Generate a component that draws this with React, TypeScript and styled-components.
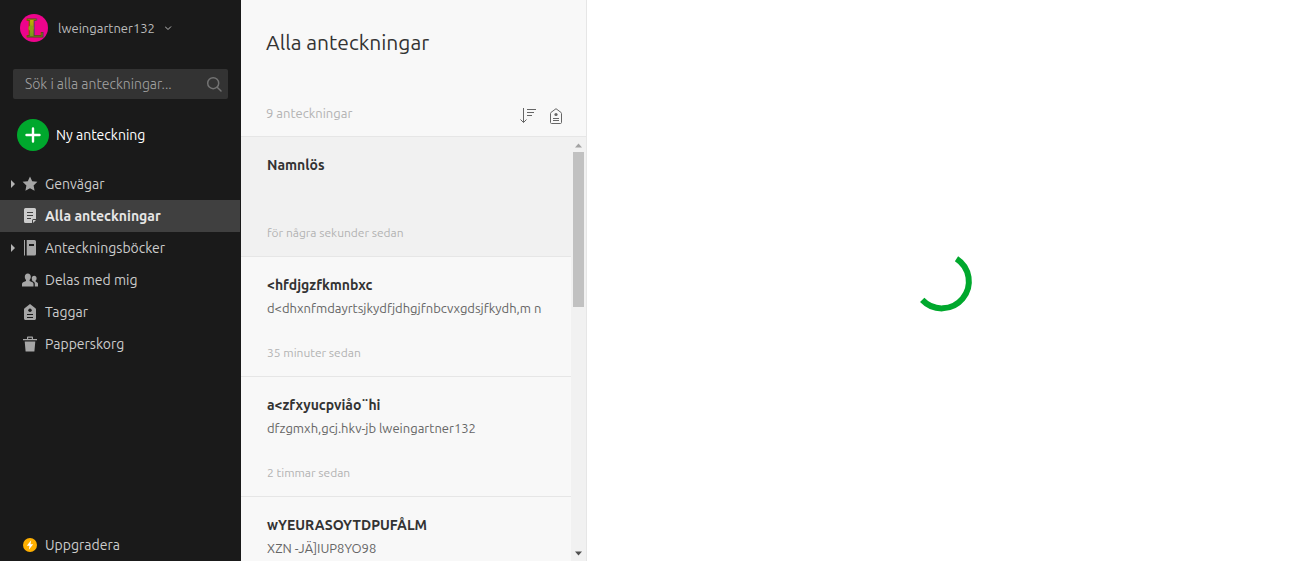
import React from 'react';
import styled, { createGlobalStyle } from 'styled-components';

const GlobalStyle = createGlobalStyle`
  *, *::before, *::after { box-sizing: border-box; }
  body {
    margin: 0;
    background: #fff;
    font-family: Ubuntu, 'Open Sans', 'Noto Sans', sans-serif;
    font-size: 13px;
  }
  button, input { font: inherit; }
  h1, h2, p, ul { margin: 0; padding: 0; }
`;

const Shell = styled.div`
  display: flex;
  height: 100vh;
  overflow: hidden;
`;

const Sidebar = styled.aside`
  display: flex;
  flex-direction: column;
  flex: none;
  width: 241px;
  border-right: 1px solid #1a1a1a;
  background: #1a1a1a;
`;

const AccountButton = styled.button`
  display: flex;
  align-items: center;
  align-self: flex-start;
  gap: 10px;
  margin: 14px 0 0 20px;
  padding: 0;
  border: 0;
  background: none;
  color: #bdbdbd;
  font-size: 13px;
  line-height: 28px;
  cursor: pointer;
`;

const SearchBox = styled.label`
  display: flex;
  align-items: center;
  height: 30px;
  margin: 27px 12px 0 13px;
  padding: 0 6px 0 12px;
  border-radius: 2px;
  background: #333;
`;

const SearchInput = styled.input`
  flex: 1;
  min-width: 0;
  padding: 0;
  border: 0;
  outline: 0;
  background: transparent;
  color: #ccc;
  font-size: 14px;
  font-weight: 300;
  &::placeholder { color: #a3a3a3; opacity: 1; }
`;

const NewNoteButton = styled.button`
  display: flex;
  align-items: center;
  align-self: flex-start;
  gap: 7px;
  margin: 20px 0 0 17px;
  padding: 0;
  border: 0;
  background: none;
  color: #fff;
  font-size: 14px;
  line-height: 32px;
  cursor: pointer;
`;

const PlusCircle = styled.span`
  display: grid;
  place-items: center;
  width: 32px;
  height: 32px;
  border-radius: 50%;
  background: #00a82d;
`;

const Nav = styled.nav`
  display: flex;
  flex: 1;
  flex-direction: column;
  margin-top: 17px;
`;

const NavLink = styled.a<{ $active?: boolean; $last?: boolean }>`
  display: grid;
  grid-template-columns: 6px 16px 1fr;
  align-items: center;
  column-gap: 7px;
  height: 32px;
  margin-top: ${p => (p.$last ? 'auto' : '0')};
  padding-left: 9px;
  background: ${p => (p.$active ? '#404040' : 'transparent')};
  color: ${p => (p.$active ? '#e6e6e6' : '#ccc')};
  font-size: 14px;
  font-weight: ${p => (p.$active ? 700 : 400)};
  text-decoration: none;
  white-space: nowrap;
  svg { color: ${p => (p.$active ? '#ccc' : '#a6a6a6')}; }
`;

const NotesPanel = styled.section`
  display: flex;
  flex-direction: column;
  flex: none;
  width: 346px;
  border-right: 1px solid #e6e6e6;
  background: #f8f8f8;
`;

const PanelHeader = styled.header`
  display: flex;
  flex-direction: column;
  justify-content: space-between;
  height: 137px;
  padding: 27px 22px 10px 25px;
  border-bottom: 1px solid #e6e6e6;
`;

const Title = styled.h1`
  color: #333;
  font-size: 21px;
  font-weight: 400;
  line-height: 30px;
`;

const Toolbar = styled.div`
  display: flex;
  align-items: flex-end;
  justify-content: space-between;
`;

const Count = styled.p`
  color: #b3b3b3;
  font-size: 13px;
  line-height: 26px;
`;

const Tools = styled.div`
  display: flex;
  gap: 12px;
`;

const IconButton = styled.button`
  display: grid;
  place-items: center;
  width: 16px;
  height: 20px;
  padding: 0;
  border: 0;
  background: none;
  color: #666;
  cursor: pointer;
`;

const ListArea = styled.div`
  display: flex;
  flex: 1;
  min-height: 0;
`;

const NoteList = styled.ul`
  flex: 1;
  min-width: 0;
  overflow: hidden;
  list-style: none;
`;

const NoteCard = styled.li<{ $selected?: boolean }>`
  display: flex;
  flex-direction: column;
  height: 120px;
  padding: 18px 26px 13px;
  border-bottom: 1px solid #e6e6e6;
  background: ${p => (p.$selected ? '#f1f1f1' : '#f8f8f8')};
`;

const NoteTitle = styled.h2`
  color: #333;
  font-size: 14px;
  font-weight: 600;
  line-height: 20px;
`;

const Snippet = styled.p`
  overflow: hidden;
  margin-top: 3px;
  color: #666;
  font-size: 13px;
  line-height: 20px;
  white-space: nowrap;
`;

const Age = styled.p`
  margin-top: auto;
  color: #b3b3b3;
  font-size: 12px;
  line-height: 20px;
`;

const Scrollbar = styled.div`
  display: flex;
  flex-direction: column;
  align-items: center;
  flex: none;
  width: 15px;
  padding: 6px 0 5px;
  background: #f1f1f1;
`;

const ScrollThumb = styled.div`
  width: 11px;
  height: 155px;
  margin: 4px 0 auto;
  background: #c1c1c1;
`;

const Editor = styled.main`
  display: grid;
  flex: 1;
  place-items: center;
  min-width: 0;
  background: #fff;
`;

const Avatar = () => (
  <svg width="28" height="28" viewBox="0 0 28 28" aria-hidden="true">
    <defs>
      <linearGradient id="avatarLetter" x1="0" y1="0" x2="0" y2="1">
        <stop offset="0.2" stopColor="#c4ad00" />
        <stop offset="0.8" stopColor="#6d9a20" />
      </linearGradient>
    </defs>
    <circle cx="14" cy="14" r="14" fill="#ee048c" />
    <text
      x="14.500" y="23" textAnchor="middle" fontFamily="'DejaVu Serif', serif" fontWeight="700" fontSize="25"
      fill="url(#avatarLetter)" stroke="#5a4a14" strokeWidth=".8"
    >L</text>
    <circle cx="11" cy="14" r="2.600" fill="#8f9f12" />
  </svg>
);

const Chevron = () => (
  <svg width="7" height="6" viewBox="0 0 7 6" fill="none" stroke="currentColor" aria-hidden="true">
    <path d="M0 1.500l3 3 3-3" />
  </svg>
);

const SearchIcon = () => (
  <svg width="16" height="16" viewBox="0 0 16 16" fill="none" stroke="#737373" strokeWidth="1.500" aria-hidden="true">
    <circle cx="7.200" cy="7.200" r="5.500" />
    <path d="M11.200 11.200L15 15" strokeLinecap="round" />
  </svg>
);

const PlusIcon = () => (
  <svg width="16" height="16" viewBox="0 0 16 16" stroke="#fff" strokeWidth="2.400" strokeLinecap="round" aria-hidden="true">
    <path d="M8 1.500v13M1.500 8h13" />
  </svg>
);

const Triangle = () => (
  <svg width="6" height="8" viewBox="0 0 6 8" fill="#b3b3b3" aria-hidden="true">
    <path d="M2 0l4 4-4 4z" />
  </svg>
);

const ScrollArrow = ({ down }: { down?: boolean }) => (
  <svg width="7" height="5" viewBox="0 0 7 5" fill={down ? '#505050' : '#a3a3a3'} aria-hidden="true">
    <path d={down ? 'M0 .5h7L3.500 4.500z' : 'M0 4.500h7L3.500 .5z'} />
  </svg>
);

const icon = { width: 16, height: 16, viewBox: '0 0 16 16', fill: 'currentColor', 'aria-hidden': true } as const;

const StarIcon = () => (
  <svg {...icon}><path d="M8 .4l2.200 4.800 5.200.6-3.800 3.600 1 5.400L8 12.200l-4.600 2.600 1-5.400L.6 5.800l5.200-.6z" /></svg>
);

const NoteIcon = () => (
  <svg {...icon}>
    <path d="M3.500 0h9A1.500 1.500 0 0 1 14 1.500V11h-2.500A1.500 1.500 0 0 0 10 12.500V15H3.500A1.500 1.500 0 0 1 2 13.500v-12A1.500 1.500 0 0 1 3.500 0z" />
    <path d="M11 12h3l-3 3z" />
    <path d="M5 4.500h6M5 7.500h6M5 10.500h4" stroke="#404040" />
  </svg>
);

const NotebookIcon = () => (
  <svg {...icon}>
    <path d="M2 0h1v15.500H2zM4.700 0h7.800A1.500 1.500 0 0 1 14 1.500v12.500a1.500 1.500 0 0 1-1.500 1.500H4.700z" />
    <path d="M7 4h5v2H7z" fill="#1a1a1a" />
  </svg>
);

const PeopleIcon = () => (
  <svg {...icon}>
    <path d="M5.800 1.500c1.900 0 3 1.300 3 3.200 0 1.400-.5 2.500-1.200 3.200v1.200l2.900 1.200c.7.300 1 .9 1 1.700v2.500H0V12c0-.8.4-1.400 1.100-1.700L4 9.100V7.900c-.7-.7-1.200-1.800-1.200-3.200 0-1.900 1.100-3.200 3-3.200z" />
    <path d="M12.200 3.700c1.500 0 2.400 1 2.400 2.500 0 1-.4 1.900-1 2.400v1l1.600.8c.5.300.8.700.8 1.400v2.700h-3.200v-2.700c0-1.100-.5-2-1.500-2.400l-1.600-.7.900-.4V8.600c-.5-.5-.9-1.400-.9-2.400 0-1.500 1-2.500 2.500-2.500z" />
  </svg>
);

const TagIcon = () => (
  <svg {...icon}>
    <path d="M8 0l5.400 4.200c.4.300.6.700.6 1.200v9.100c0 .8-.7 1.500-1.500 1.500h-9C2.700 16 2 15.300 2 14.500V5.400c0-.5.200-.9.600-1.200z" />
    <circle cx="8" cy="6.300" r="1.700" fill="#1a1a1a" />
    <path d="M5 10.500h6M5 13.500h6" stroke="#1a1a1a" />
  </svg>
);

const TrashIcon = () => (
  <svg {...icon}>
    <path d="M1 3h4V1.500C5 .9 5.400.500 6 .500h4c.6 0 1 .4 1 1V3h4v1.300H1zM6.200 1.700V3h3.600V1.700zM2.700 5.500h10.600l-.9 10H3.600z" fillRule="evenodd" />
  </svg>
);

const BoltIcon = () => (
  <svg {...icon}>
    <circle cx="8" cy="8" r="7" fill="#ffb000" />
    <path d="M9.200 3.300L4.800 8.800h2.700l-.7 3.900 4.400-5.500H8.500z" fill="#fff" />
  </svg>
);

const SortIcon = () => (
  <svg {...icon} fill="none" stroke="currentColor">
    <path d="M3.500 0v14.500M.5 11.500l3 3 3-3M7 1.500h9M7 4.500h7M7 7.500h5" />
  </svg>
);

const TagOutlineIcon = () => (
  <svg {...icon} fill="none" stroke="currentColor">
    <path d="M8 .7l5.200 3.900c.2.200.3.500.3.900v9c0 .6-.4 1-1 1h-9c-.6 0-1-.4-1-1v-9c0-.4.100-.7.300-.9z" />
    <circle cx="8" cy="6.500" r="1.600" fill="currentColor" stroke="none" />
    <path d="M5 10.500h6M5 12.500h6" />
  </svg>
);

const Spinner = () => (
  <svg width="60" height="60" viewBox="0 0 60 60" fill="none" overflow="visible" role="img" aria-label="Laddar">
    <path d="M45.500 7.700A27 27 0 1 1 11.200 48.900" stroke="#00a82d" strokeWidth="6" />
  </svg>
);

type NavItem = { label: string; Icon: React.FC; expandable?: boolean; active?: boolean };

const navItems: NavItem[] = [
  { label: 'Genvägar', Icon: StarIcon, expandable: true },
  { label: 'Alla anteckningar', Icon: NoteIcon, active: true },
  { label: 'Anteckningsböcker', Icon: NotebookIcon, expandable: true },
  { label: 'Delas med mig', Icon: PeopleIcon },
  { label: 'Taggar', Icon: TagIcon },
  { label: 'Papperskorg', Icon: TrashIcon },
];

const notes = [
  { title: 'Namnlös', snippet: '', age: 'för några sekunder sedan' },
  { title: '<hfdjgzfkmnbxc', snippet: 'd<dhxnfmdayrtsjkydfjdhgjfnbcvxgdsjfkydh,m n', age: '35 minuter sedan' },
  { title: 'a<zfxyucpviåo¨hi', snippet: 'dfzgmxh,gcj.hkv-jb lweingartner132', age: '2 timmar sedan' },
  { title: 'wYEURASOYTDPUFÅLM', snippet: 'XZN -JÄ]IUP8YO98', age: '' },
];

export default function App() {
  return (
    <>
      <GlobalStyle />
      <Shell>
        <Sidebar>
          <AccountButton type="button">
            <Avatar />
            lweingartner132
            <Chevron />
          </AccountButton>
          <SearchBox>
            <SearchInput type="text" placeholder="Sök i alla anteckningar..." aria-label="Sök i alla anteckningar" />
            <SearchIcon />
          </SearchBox>
          <NewNoteButton type="button">
            <PlusCircle><PlusIcon /></PlusCircle>
            Ny anteckning
          </NewNoteButton>
          <Nav>
            {navItems.map(({ label, Icon, expandable, active }) => (
              <NavLink key={label} href="#" $active={active}>
                {expandable ? <Triangle /> : <span />}
                <Icon />
                {label}
              </NavLink>
            ))}
            <NavLink href="#" $last>
              <span />
              <BoltIcon />
              Uppgradera
            </NavLink>
          </Nav>
        </Sidebar>
        <NotesPanel>
          <PanelHeader>
            <Title>Alla anteckningar</Title>
            <Toolbar>
              <Count>9 anteckningar</Count>
              <Tools>
                <IconButton type="button" aria-label="Sortera"><SortIcon /></IconButton>
                <IconButton type="button" aria-label="Filtrera på tagg"><TagOutlineIcon /></IconButton>
              </Tools>
            </Toolbar>
          </PanelHeader>
          <ListArea>
            <NoteList>
              {notes.map((note, i) => (
                <NoteCard key={note.title} $selected={i === 0}>
                  <NoteTitle>{note.title}</NoteTitle>
                  {note.snippet && <Snippet>{note.snippet}</Snippet>}
                  {note.age && <Age>{note.age}</Age>}
                </NoteCard>
              ))}
            </NoteList>
            <Scrollbar aria-hidden="true">
              <ScrollArrow />
              <ScrollThumb />
              <ScrollArrow down />
            </Scrollbar>
          </ListArea>
        </NotesPanel>
        <Editor>
          <Spinner />
        </Editor>
      </Shell>
    </>
  );
}
